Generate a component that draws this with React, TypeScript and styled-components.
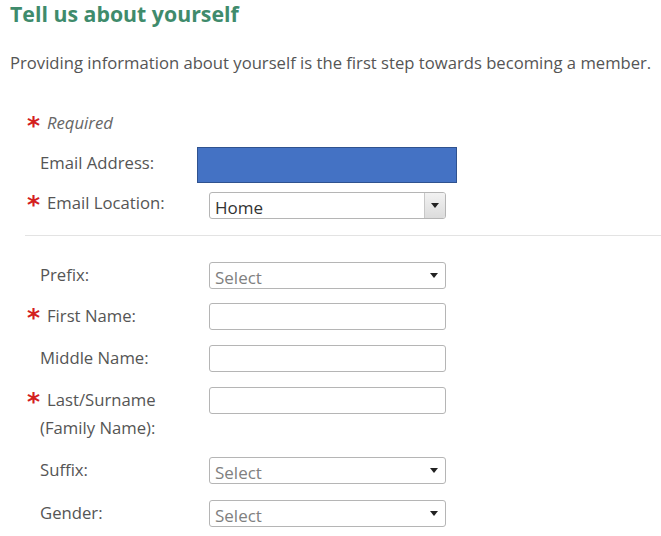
import React from "react";
import styled, { createGlobalStyle } from "styled-components";

const Global = createGlobalStyle`
  html, body { margin: 0; padding: 0; background: #fff; }
  body { font-family: "Open Sans", "Liberation Sans", sans-serif; color: #555; }
`;

const Page = styled.div`
  width: 661px;
  height: 536px;
  overflow: hidden;
  padding-left: 10px;
  box-sizing: border-box;
`;

const Heading = styled.h1`
  margin: 0;
  font-size: 21.3px;
  line-height: 28px;
  font-weight: 700;
  color: #3f8b6c;
`;

const Intro = styled.p`
  margin: 23px 0 0;
  font-size: 16.65px;
  line-height: 24px;
  color: #555;
  white-space: nowrap;
`;

const Form = styled.div`
  margin-left: 15px;
  display: flex;
  flex-direction: column;
`;

const RequiredNote = styled.div`
  margin-top: 34px;
  height: 28px;
  display: flex;
  align-items: center;
  font-size: 16.7px;
  line-height: 28px;
  font-style: italic;
  color: #666;
`;

const Row = styled.div<{ $gap?: number }>`
  display: flex;
  align-items: flex-start;
  margin-top: ${(p) => p.$gap ?? 15}px;
`;

const Label = styled.div<{ $offset?: number }>`
  width: 184px;
  flex: none;
  box-sizing: border-box;
  padding-left: 15px;
  margin-top: ${(p) => p.$offset ?? -1}px;
  font-size: 16.7px;
  line-height: 28px;
  color: #555;
  position: relative;
`;

const Star = styled.span`
  position: absolute;
  left: 2px;
  top: 4px;
  font-family: "DejaVu Sans", sans-serif;
  font-weight: 700;
  font-size: 25px;
  line-height: 24px;
  color: #d41f1f;
`;

const StarInline = styled.span`
  display: inline-block;
  width: 22px;
  padding-left: 2px;
  box-sizing: border-box;
  font-family: "DejaVu Sans", sans-serif;
  font-weight: 700;
  font-size: 25px;
  line-height: 24px;
  color: #d41f1f;
  transform: translateY(3px);
`;

const ReqText = styled.span<{ $req?: boolean }>`
  margin-left: ${(p) => (p.$req ? 7 : 0)}px;
`;

const Redacted = styled.div`
  margin-left: -12px;
  width: 260px;
  height: 36px;
  box-sizing: border-box;
  background: #4472c4;
  border: 1px solid #2f528f;
`;

const Control = styled.div`
  width: 237px;
  height: 27px;
  box-sizing: border-box;
  border: 1px solid #b5b5b5;
  border-radius: 3px;
  background: #fff;
  display: flex;
  align-items: center;
  position: relative;
  overflow: hidden;
`;

const SelectText = styled.span<{ $placeholder?: boolean }>`
  padding-left: 5px;
  font-size: 17px;
  line-height: 25px;
  margin-top: 3px;
  color: ${(p) => (p.$placeholder ? "#808080" : "#333")};
  flex: 1;
`;

const Caret = styled.span`
  width: 0;
  height: 0;
  border-left: 4px solid transparent;
  border-right: 4px solid transparent;
  border-top: 5px solid #222;
  margin-right: 7px;
`;

const NativeButton = styled.span`
  align-self: stretch;
  width: 20px;
  border-left: 1px solid #c8c8c8;
  background: linear-gradient(#f2f2f2, #dcdcdc);
  display: flex;
  align-items: center;
  justify-content: center;
`;

const SmallCaret = styled(Caret)`
  margin-right: 0;
`;

const Divider = styled.hr`
  margin: 16px 0 0;
  border: none;
  border-top: 1px solid #e3e3e3;
  height: 0;
`;

type FieldProps = { label: React.ReactNode; required?: boolean; gap?: number; offset?: number; children: React.ReactNode };

const Field = ({ label, required, gap, offset, children }: FieldProps) => (
  <Row $gap={gap}>
    <Label $offset={offset}>
      {required && <Star>*</Star>}
      <ReqText $req={required}>{label}</ReqText>
    </Label>
    {children}
  </Row>
);

const SelectBox = ({ value, native }: { value?: string; native?: boolean }) => (
  <Control>
    <SelectText $placeholder={!value}>{value ?? "Select"}</SelectText>
    {native ? (
      <NativeButton>
        <SmallCaret />
      </NativeButton>
    ) : (
      <Caret />
    )}
  </Control>
);

export default function App() {
  return (
    <>
      <Global />
      <Page>
        <Heading>Tell us about yourself</Heading>
        <Intro>Providing information about yourself is the first step towards becoming a member.</Intro>
        <Form>
          <RequiredNote>
            <StarInline>*</StarInline>
            <span>Required</span>
          </RequiredNote>
          <Row $gap={10}>
            <Label $offset={2}>Email Address:</Label>
            <Redacted />
          </Row>
          <Field label="Email Location:" required gap={9} offset={-3}>
            <SelectBox value="Home" native />
          </Field>
          <Divider />
          <Field label="Prefix:" gap={26}>
            <SelectBox />
          </Field>
          <Field label="First Name:" required gap={14}>
            <Control />
          </Field>
          <Field label="Middle Name:">
            <Control />
          </Field>
          <Field
            label={
              <>
                Last/Surname
                <br />
                (Family Name):
              </>
            }
            required
          >
            <Control />
          </Field>
          <Field label="Suffix:" gap={15}>
            <SelectBox />
          </Field>
          <Field label="Gender:" gap={16}>
            <SelectBox />
          </Field>
        </Form>
      </Page>
    </>
  );
}
